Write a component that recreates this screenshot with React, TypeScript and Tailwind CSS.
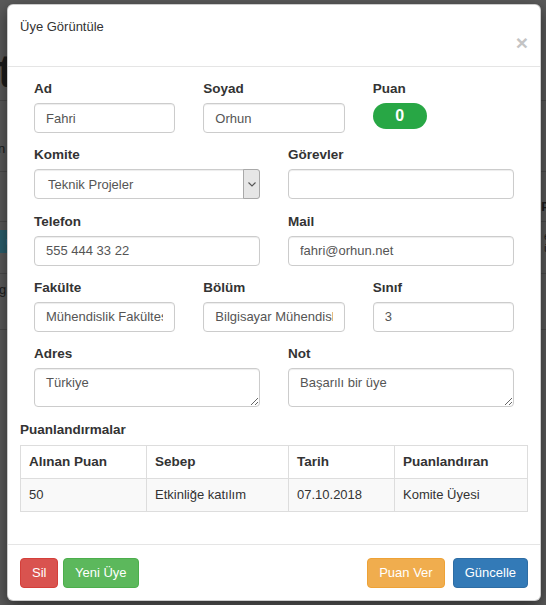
import React from "react";

/* Dimmed page that sits behind the modal */

function BackdropPage() {
  return (
    <div className="flex w-full flex-col text-[#1c1c1c]">
      <div className="flex h-[101px] items-start border-b border-[#4b4b4b] pt-[48px]">
        <span className="-ml-[2px] text-[46px] font-bold leading-[46px]">t</span>
      </div>
      <div className="flex h-[71px] items-start justify-between border-b border-[#4b4b4b] pt-[38px]">
        <span className="-ml-[2px] text-[13px]">n</span>
      </div>
      <div className="flex h-[50px] items-start justify-end border-b border-[#4b4b4b] pt-[25px]">
        <span className="-mr-[4px] text-[13px] font-bold">P</span>
      </div>
      <div className="flex h-[52px] items-start justify-between border-b border-[#4b4b4b] pt-[8px]">
        <span className="flex h-[23px] w-[14px] items-center justify-end bg-[#2a5e6c] pr-[1px] text-[12px] text-[#9fb7bd]">
          ü
        </span>
        <span className="-mr-[4px] flex flex-col text-[11px] leading-[12px]">
          <span>e</span>
          <span>ü</span>
        </span>
      </div>
      <div className="flex h-[56px] items-start border-b border-[#4b4b4b] pt-[6px]">
        <span className="-ml-[1px] text-[13px]">g</span>
      </div>
    </div>
  );
}

/* Form pieces */

function Label({ children }: { children: React.ReactNode }) {
  return (
    <div className="mb-[4px] text-[13.5px] font-bold leading-[20px] text-[#333]">
      {children}
    </div>
  );
}

function TextInput({ value }: { value: string }) {
  return (
    <input
      readOnly
      value={value}
      className="h-[30px] w-full min-w-0 rounded-[4px] border border-[#ccc] bg-white px-[11px] text-[13px] text-[#555] shadow-[inset_0_1px_1px_rgba(0,0,0,0.075)] outline-none"
    />
  );
}

function TextArea({ value }: { value: string }) {
  return (
    <textarea
      readOnly
      value={value}
      className="block h-[39px] w-full resize-y rounded-[4px] border border-[#ccc] bg-white px-[11px] pt-[4px] text-[13px] leading-[20px] text-[#555] shadow-[inset_0_1px_1px_rgba(0,0,0,0.075)] outline-none"
    />
  );
}

function FakeSelect({ value }: { value: string }) {
  return (
    <div className="flex h-[30px] w-full items-stretch rounded-[4px] border border-[#ccc] bg-white shadow-[inset_0_1px_1px_rgba(0,0,0,0.075)]">
      <span className="flex flex-1 items-center pl-[13px] text-[13px] text-[#555]">
        {value}
      </span>
      <span className="-my-px -mr-px flex w-[17px] items-center justify-center rounded-r-[3px] border border-[#a9a9a9] bg-[#e6e6e6]">
        <svg width="8" height="5" viewBox="0 0 8 5" fill="none">
          <path d="M0.5 0.5 L4 4 L7.5 0.5" stroke="#555" strokeWidth="1.1" />
        </svg>
      </span>
    </div>
  );
}

function Field({
  label,
  children,
}: {
  label: string;
  children: React.ReactNode;
}) {
  return (
    <div className="flex min-w-0 flex-col">
      <Label>{label}</Label>
      {children}
    </div>
  );
}

const scores = [
  {
    points: "50",
    reason: "Etkinliğe katılım",
    date: "07.10.2018",
    by: "Komite Üyesi",
  },
];

export default function App() {
  return (
    <div className="relative h-[605px] w-[546px] overflow-hidden bg-[#5a5a5a] font-['Liberation_Sans',Arial,Helvetica,sans-serif]">
      <BackdropPage />

      <div className="absolute left-[7px] top-[4px] w-[534px] rounded-[6px] border border-black/20 bg-white shadow-[0_5px_15px_rgba(0,0,0,0.5)]">
        {/* header */}
        <div className="box-border flex h-[62px] flex-col border-b border-[#e5e5e5] px-[12px] pt-[12px]">
          <div className="text-[13px] leading-[20px] text-[#333]">Üye Görüntüle</div>
          <div className="-mt-[5px] flex justify-end">
            <span className="text-[21px] font-bold leading-[21px] text-[#c4c4c4]">
              ×
            </span>
          </div>
        </div>

        {/* body */}
        <div className="px-[12px] pt-[12px]">
          <div className="flex flex-col gap-y-[12.3px] px-[14px]">
            <div className="grid grid-cols-3 gap-x-[28px]">
              <Field label="Ad">
                <TextInput value="Fahri" />
              </Field>
              <Field label="Soyad">
                <TextInput value="Orhun" />
              </Field>
              <Field label="Puan">
                <span className="flex h-[26px] w-[54px] items-center justify-center rounded-full bg-[#28a745] text-[16px] font-bold text-white">
                  0
                </span>
              </Field>
            </div>
            <div className="grid grid-cols-2 gap-x-[28px]">
              <Field label="Komite">
                <FakeSelect value="Teknik Projeler" />
              </Field>
              <Field label="Görevler">
                <TextInput value="" />
              </Field>
            </div>
            <div className="grid grid-cols-2 gap-x-[28px]">
              <Field label="Telefon">
                <TextInput value="555 444 33 22" />
              </Field>
              <Field label="Mail">
                <TextInput value="fahri@orhun.net" />
              </Field>
            </div>
            <div className="grid grid-cols-3 gap-x-[28px]">
              <Field label="Fakülte">
                <TextInput value="Mühendislik Fakültesi" />
              </Field>
              <Field label="Bölüm">
                <TextInput value="Bilgisayar Mühendisliği" />
              </Field>
              <Field label="Sınıf">
                <TextInput value="3" />
              </Field>
            </div>
            <div className="grid grid-cols-2 gap-x-[28px]">
              <Field label="Adres">
                <TextArea value="Türkiye" />
              </Field>
              <Field label="Not">
                <TextArea value="Başarılı bir üye" />
              </Field>
            </div>
          </div>

          <div className="mt-[12.5px] mb-[5px] text-[13.5px] font-bold leading-[20px] text-[#333]">
            Puanlandırmalar
          </div>
          <table className="mb-[32px] w-full table-fixed border-collapse text-[13px] text-[#333]">
            <colgroup>
              <col className="w-[126px]" />
              <col className="w-[142px]" />
              <col className="w-[106px]" />
              <col />
            </colgroup>
            <thead>
              <tr>
                {["Alınan Puan", "Sebep", "Tarih", "Puanlandıran"].map((h) => (
                  <th
                    key={h}
                    className="border border-[#ddd] px-[8px] py-[7px] text-left text-[13.5px] font-bold leading-[18px]"
                  >
                    {h}
                  </th>
                ))}
              </tr>
            </thead>
            <tbody>
              {scores.map((s, i) => (
                <tr key={i} className="bg-[#f9f9f9]">
                  <td className="border border-[#ddd] px-[8px] py-[7px] leading-[18px]">{s.points}</td>
                  <td className="border border-[#ddd] px-[8px] py-[7px] leading-[18px]">{s.reason}</td>
                  <td className="border border-[#ddd] px-[8px] py-[7px] leading-[18px]">{s.date}</td>
                  <td className="border border-[#ddd] px-[8px] py-[7px] leading-[18px]">{s.by}</td>
                </tr>
              ))}
            </tbody>
          </table>
        </div>

        {/* footer */}
        <div className="flex items-center justify-between border-t border-[#e5e5e5] px-[12px] pt-[13px] pb-[12px]">
          <div className="flex gap-[4.5px]">
            <button className="h-[30px] rounded-[4px] border border-[#d43f3a] bg-[#d9534f] px-[11px] text-[13px] text-white">
              Sil
            </button>
            <button className="h-[30px] rounded-[4px] border border-[#4cae4c] bg-[#5cb85c] px-[11px] text-[13px] text-white">
              Yeni Üye
            </button>
          </div>
          <div className="flex gap-[8px]">
            <button className="h-[30px] rounded-[4px] border border-[#eea236] bg-[#f0ad4e] px-[11px] text-[13px] text-white">
              Puan Ver
            </button>
            <button className="h-[30px] rounded-[4px] border border-[#2e6da4] bg-[#337ab7] px-[11px] text-[13px] text-white">
              Güncelle
            </button>
          </div>
        </div>
      </div>
    </div>
  );
}
